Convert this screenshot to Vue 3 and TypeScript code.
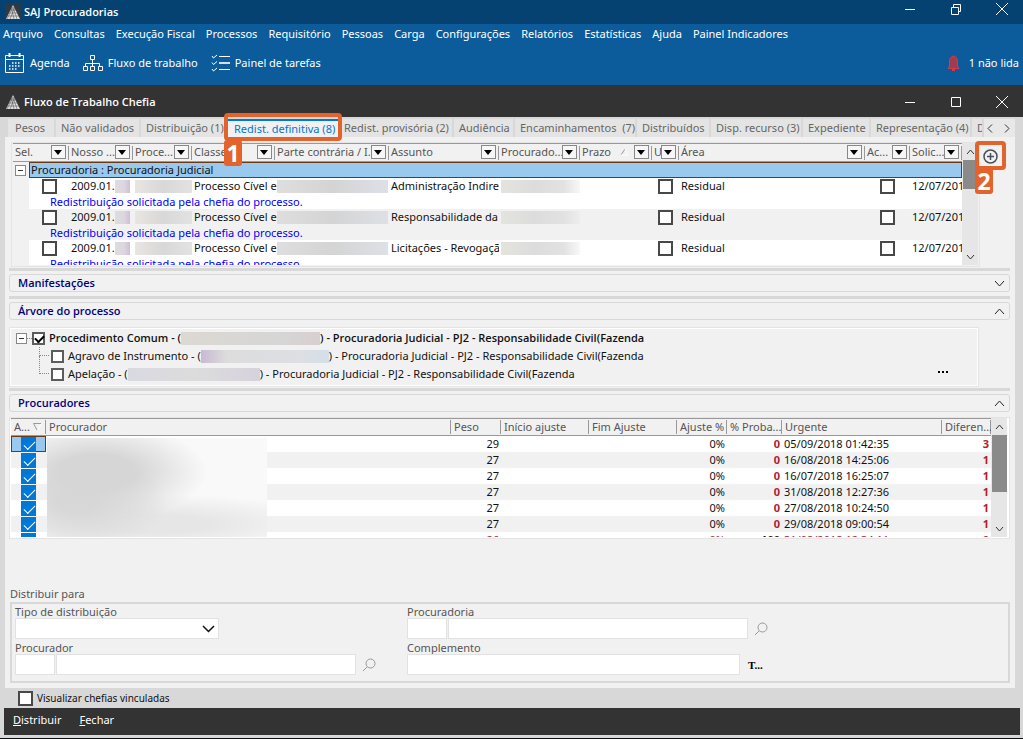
<script setup lang="ts">
import { ref } from 'vue'

interface Tab { id: string; label: string; active?: boolean }
interface Column { id: string; label: string; span?: number }
interface Attorney {
  active: boolean; weight: string; adjust: string; share: string; urgent: string; diff: string; alert?: boolean
}

const menus: string[] = [
  'Arquivo', 'Consultas', 'Execução Fiscal', 'Processos', 'Requisitório', 'Pessoas', 'Carga',
  'Configurações', 'Relatórios', 'Estatísticas', 'Ajuda', 'Painel Indicadores',
]

const tabs: Tab[] = [
  { id: 'pesos', label: 'Pesos' },
  { id: 'nao-validados', label: 'Não validados' },
  { id: 'distribuicao', label: 'Distribuição (1)' },
  { id: 'definitiva', label: 'Redist. definitiva (8)', active: true },
  { id: 'provisoria', label: 'Redist. provisória (2)' },
  { id: 'audiencia', label: 'Audiência' },
  { id: 'encaminhamentos', label: 'Encaminhamentos  (7)' },
  { id: 'distribuidos', label: 'Distribuídos' },
  { id: 'recurso', label: 'Disp. recurso (3)' },
  { id: 'expediente', label: 'Expediente' },
  { id: 'representacao', label: 'Representação (4)' },
  { id: 'last', label: 'D' },
]

const columns: Column[] = [
  { id: 'sel', label: 'Sel.', span: 2 },
  { id: 'nosso', label: 'Nosso ...' },
  { id: 'proce', label: 'Proce...' },
  { id: 'classe', label: 'Classe' },
  { id: 'parte', label: 'Parte contrária / I...' },
  { id: 'assunto', label: 'Assunto' },
  { id: 'procurador', label: 'Procurado...' },
  { id: 'prazo', label: 'Prazo' },
  { id: 'urgente', label: 'U' },
  { id: 'area', label: 'Área' },
  { id: 'acao', label: 'Ac...' },
  { id: 'solic', label: 'Solic...' },
]

const cases = ref([
  { subject: 'Administração Indireta', selected: false, urgent: false, action: false },
  { subject: 'Responsabilidade da', selected: false, urgent: false, action: false },
  { subject: 'Licitações - Revogação', selected: false, urgent: false, action: false },
])

const attorneyColumns: string[] = [
  'Procurador', 'Peso', 'Início ajuste', 'Fim Ajuste', 'Ajuste %', '% Proba...', 'Urgente', 'Diferen...',
]

const attorneys = ref<Attorney[]>([
  { active: true, weight: '29', adjust: '0%', share: '0', urgent: '05/09/2018 01:42:35', diff: '3' },
  { active: true, weight: '27', adjust: '0%', share: '0', urgent: '16/08/2018 14:25:06', diff: '1' },
  { active: true, weight: '27', adjust: '0%', share: '0', urgent: '16/07/2018 16:25:07', diff: '1' },
  { active: true, weight: '27', adjust: '0%', share: '0', urgent: '31/08/2018 12:27:36', diff: '1' },
  { active: true, weight: '27', adjust: '0%', share: '0', urgent: '27/08/2018 10:24:50', diff: '1' },
  { active: true, weight: '27', adjust: '0%', share: '0', urgent: '29/08/2018 09:00:54', diff: '1' },
  { active: true, weight: '26', adjust: '0%', share: '100', urgent: '31/08/2018 12:34:11', diff: '0', alert: true },
])

const rootChecked = ref(true)
const showLinked = ref(false)
</script>

<template>
  <div class="app">
    <header class="titlebar">
      <svg class="logo framed" width="16" height="16" viewBox="0 0 16 16" aria-hidden="true">
        <path d="M8 1 15 15H1Z" fill="#e0e0e0" />
        <path d="M1 12h14M2 9h12M4 6h8M5 15 9.500 4M9 15 6.500 4M12 15 8 3M2 15 8 3" stroke="#444" stroke-width=".5" fill="none" />
      </svg>
      <h1>SAJ Procuradorias</h1>
      <div class="window-buttons">
        <button aria-label="Minimizar"><svg width="12" height="12"><path d="M1 6.500h10" /></svg></button>
        <button aria-label="Restaurar"><svg width="12" height="12"><path d="M1.500 4.500h7v7h-7zM3.500 4V1.500h7v7H9" /></svg></button>
        <button aria-label="Fechar aplicativo"><svg width="14" height="14"><path d="m1 1 12 12M13 1 1 13" /></svg></button>
      </div>
    </header>

    <div class="ribbon">
      <nav class="menu">
        <button v-for="m in menus" :key="m">{{ m }}</button>
      </nav>
      <div class="tools">
        <button class="tool">
          <svg width="20" height="20" viewBox="0 0 20 20" fill="none" stroke="#fff">
            <path d="M.500 2.500h18v17H.500zM.500 6.500h18" />
            <path d="M4.500 0v4M14.500 0v4" stroke-width="2" />
            <path d="M7 10h9M4 13h12M4 16h9" stroke-width="1.500" stroke-dasharray="1.500 1.500" />
          </svg>
          Agenda
        </button>
        <button class="tool flow">
          <svg width="20" height="18" viewBox="0 0 20 18" fill="none" stroke="#fff">
            <path d="M7.500 1.500h4v4h-4zM9.500 5.500v7M2.500 12.500v-3h14v3M.500 12.500h4v4h-4zM7.500 12.500h4v4h-4zM15.500 12.500h4v4h-4z" />
          </svg>
          Fluxo de trabalho
        </button>
        <button class="tool tasks">
          <svg width="20" height="18" viewBox="0 0 20 18" fill="none" stroke="#fff">
            <path d="m1 2 1.500 2L6 1M1 8.500l1.500 2 3.500-3M1 15l1.500 2L6 14" />
            <path d="M8 2.500h11M8 15.500h11" />
            <path d="M8 9h11" stroke="#cfe0ee" stroke-width="2" />
          </svg>
          Painel de tarefas
        </button>
        <button class="tool unread">
          <svg width="13" height="17" viewBox="0 0 13 17">
            <path d="M6.500 1C3.500 1.500 2.500 4 2.500 7v4L1 13.500h11L10.500 11V7c0-3-1-5.500-4-6Z" fill="#a33b50" stroke="#d33a45" />
            <path d="M5 15h3" stroke="#d33a45" stroke-width="2" />
          </svg>
          1 não lida
        </button>
      </div>
    </div>

    <div class="subtitle">
      <svg class="logo" width="16" height="16" viewBox="0 0 16 16" aria-hidden="true">
        <path d="M8 1 15 15H1Z" fill="#e0e0e0" />
        <path d="M1 12h14M2 9h12M4 6h8M5 15 9.500 4M9 15 6.500 4M12 15 8 3M2 15 8 3" stroke="#444" stroke-width=".5" fill="none" />
      </svg>
      <h2>Fluxo de Trabalho Chefia</h2>
      <div class="window-buttons">
        <button aria-label="Minimizar janela"><svg width="12" height="12"><path d="M1 6.500h10" /></svg></button>
        <button aria-label="Maximizar janela"><svg width="12" height="12"><path d="M1.500 1.500h9v9h-9z" /></svg></button>
        <button aria-label="Fechar janela"><svg width="14" height="14"><path d="m1 1 12 12M13 1 1 13" /></svg></button>
      </div>
    </div>

    <main class="workspace">
      <div class="tabs">
        <button v-for="t in tabs" :key="t.id" :class="['tab', t.id, { active: t.active }]">
          <span>{{ t.label }}</span>
          <span v-if="t.active" class="marker"><b>1</b></span>
        </button>
        <div class="tab-scroll">
          <button aria-label="Abas anteriores"><svg width="6" height="9"><path d="M5 .500 1 4.500l4 4" /></svg></button>
          <button aria-label="Próximas abas"><svg width="6" height="9"><path d="m1 .500 4 4-4 4" /></svg></button>
        </div>
      </div>

      <div class="panel">
        <div class="top-area">
          <div class="box cases">
            <div class="viewport">
              <table>
                <colgroup>
                  <col class="w-gutter"><col class="w-sel"><col class="w-nosso"><col class="w-proce"><col class="w-classe">
                  <col class="w-parte"><col class="w-assunto"><col class="w-procurador"><col class="w-prazo">
                  <col class="w-urgente"><col><col class="w-acao"><col class="w-solic">
                </colgroup>
                <thead>
                  <tr>
                    <th v-for="c in columns" :key="c.id" :colspan="c.span ?? 1" :class="c.id">
                      <div class="head">
                        <span>{{ c.label }}</span>
                        <svg v-if="c.id === 'prazo'" class="sort" width="9" height="8"><path d="M1 7 5 1" stroke="#999" /><path d="m5 1 3 6H1" stroke="#fff" fill="none" /></svg>
                        <button class="filter" :aria-label="'Filtrar ' + c.label"><svg width="9" height="5"><path d="M0 0h8L4 5Z" /></svg></button>
                      </div>
                    </th>
                  </tr>
                </thead>
                <tbody>
                  <tr class="group">
                    <td class="gutter"><button class="expander" aria-label="Recolher grupo"></button></td>
                    <td colspan="12" class="group-title">Procuradoria : Procuradoria Judicial</td>
                  </tr>
                </tbody>
                <tbody v-for="(c, i) in cases" :key="i" class="case">
                  <tr>
                    <td class="gutter"></td>
                    <td class="center"><input v-model="c.selected" type="checkbox" class="tick" aria-label="Selecionar processo"></td>
                    <td><div class="number">2009.01.<i class="mask violet"></i></div></td>
                    <td><i class="mask warm"></i></td>
                    <td class="class-name">Processo Cível e</td>
                    <td><i class="mask cool"></i></td>
                    <td>{{ c.subject }}</td>
                    <td><i class="mask faint"></i></td>
                    <td></td>
                    <td class="center"><input v-model="c.urgent" type="checkbox" class="tick" aria-label="Urgente"></td>
                    <td>Residual</td>
                    <td class="center"><input v-model="c.action" type="checkbox" class="tick" aria-label="Ação"></td>
                    <td>12/07/2018</td>
                  </tr>
                  <tr class="note">
                    <td class="gutter"></td>
                    <td colspan="12">Redistribuição solicitada pela chefia do processo.</td>
                  </tr>
                </tbody>
              </table>
            </div>
            <div class="scrollbar">
              <button aria-label="Rolar processos para cima"><svg width="9" height="6"><path d="m1 5 3.500-4L8 5" /></svg></button>
              <div class="thumb small"></div>
              <button aria-label="Rolar processos para baixo"><svg width="9" height="6"><path d="m1 1 3.500 4L8 1" /></svg></button>
            </div>
          </div>
          <button class="add" aria-label="Adicionar">
            <svg width="15" height="15" viewBox="0 0 15 15"><circle cx="7.500" cy="7.500" r="6.500" /><path d="M4 7.500h7M7.500 4v7" /></svg>
            <span class="marker"><b>2</b></span>
          </button>
        </div>

        <div class="splitter"></div>
        <button class="section">Manifestações<svg width="11" height="7"><path d="m1 1 4.500 5L10 1" /></svg></button>
        <div class="splitter"></div>
        <button class="section">Árvore do processo<svg width="11" height="7"><path d="M1 6 5.500 1 10 6" /></svg></button>

        <div class="box tree">
          <div class="node root">
            <button class="expander" aria-label="Recolher árvore"></button>
            <span class="dots"></span>
            <label><input v-model="rootChecked" type="checkbox" class="tick light">Procedimento Comum - (<i class="mask sand"></i>) - Procuradoria Judicial - PJ2 - Responsabilidade Civil(Fazenda</label>
          </div>
          <div class="node child">
            <span class="branch"></span>
            <label><input type="checkbox" class="tick light">Agravo de Instrumento - (<i class="mask lilac"></i>) - Procuradoria Judicial - PJ2 - Responsabilidade Civil(Fazenda</label>
          </div>
          <div class="node child">
            <span class="branch"></span>
            <label><input type="checkbox" class="tick light">Apelação - (<i class="mask plain"></i>) - Procuradoria Judicial - PJ2 - Responsabilidade Civil(Fazenda</label>
            <button class="more" aria-label="Mais opções"><svg width="11" height="2"><path d="M0 0h2v2H0zM4 0h2v2H4zM8 0h2v2H8z" /></svg></button>
          </div>
        </div>

        <div class="splitter"></div>
        <button class="section">Procuradores<svg width="11" height="7"><path d="M1 6 5.500 1 10 6" /></svg></button>

        <div class="box attorneys">
          <div class="viewport">
            <table>
              <colgroup>
                <col class="w-active"><col><col class="w-peso"><col class="w-date"><col class="w-date">
                <col class="w-adjust"><col class="w-share"><col class="w-urgent"><col class="w-diff">
              </colgroup>
              <thead>
                <tr>
                  <th><div class="head">A...<svg width="9" height="8" fill="none"><path d="M8 .500H.500L4 7" stroke="#999" /><path d="M8 1 5 7" stroke="#fff" /></svg></div></th>
                  <th v-for="c in attorneyColumns" :key="c">{{ c }}</th>
                </tr>
              </thead>
              <tbody>
                <tr v-for="(a, i) in attorneys" :key="i" :class="{ alert: a.alert }">
                  <td class="active-cell"><input v-model="a.active" type="checkbox" class="blue-tick" aria-label="Procurador ativo"></td>
                  <td></td>
                  <td class="num">{{ a.weight }}</td>
                  <td></td>
                  <td></td>
                  <td class="num">{{ a.adjust }}</td>
                  <td class="num strong share">{{ a.share }}</td>
                  <td>{{ a.urgent }}</td>
                  <td class="num strong">{{ a.diff }}</td>
                </tr>
              </tbody>
            </table>
            <div class="haze"></div>
          </div>
          <div class="scrollbar">
            <button aria-label="Rolar procuradores para cima"><svg width="9" height="6"><path d="m1 5 3.500-4L8 5" /></svg></button>
            <div class="thumb large"></div>
            <button aria-label="Rolar procuradores para baixo"><svg width="9" height="6"><path d="m1 1 3.500 4L8 1" /></svg></button>
          </div>
        </div>

        <section class="distribute">
          <h3>Distribuir para</h3>
          <form class="fields" @submit.prevent>
            <div class="field">
              <label for="tipo">Tipo de distribuição</label>
              <div class="line">
                <div class="select">
                  <select id="tipo"><option></option></select>
                  <svg width="13" height="8"><path d="m1 1 5.500 5.500L12 1" /></svg>
                </div>
              </div>
            </div>
            <div class="field">
              <label for="procuradoria">Procuradoria</label>
              <div class="line">
                <input id="procuradoria" class="code" type="text">
                <input class="name" type="text" aria-label="Nome da procuradoria">
                <button class="search" aria-label="Buscar procuradoria"><svg width="14" height="14"><circle cx="8.500" cy="5.500" r="4.500" /><path d="M5 9 1 13" /></svg></button>
              </div>
            </div>
            <div class="field">
              <label for="procurador">Procurador</label>
              <div class="line">
                <input id="procurador" class="code" type="text">
                <input class="name" type="text" aria-label="Nome do procurador">
                <button class="search" aria-label="Buscar procurador"><svg width="14" height="14"><circle cx="8.500" cy="5.500" r="4.500" /><path d="M5 9 1 13" /></svg></button>
              </div>
            </div>
            <div class="field">
              <label for="complemento">Complemento</label>
              <div class="line">
                <input id="complemento" class="extra" type="text">
                <button class="text-button">T...</button>
              </div>
            </div>
          </form>
        </section>
      </div>

      <label class="linked"><input v-model="showLinked" type="checkbox" class="tick">Visualizar chefias vinculadas</label>

      <footer class="actions">
        <button><u>D</u>istribuir</button>
        <button><u>F</u>echar</button>
      </footer>
    </main>
  </div>
</template>

<style>
body {
  margin: 0;
  background: #d8d8d8;
}
</style>

<style scoped>
* {
  box-sizing: border-box;
}

.app {
  display: flex;
  flex-direction: column;
  min-height: 100vh;
  overflow: hidden;
  border-bottom: 1px solid #0b0f14;
  font: 11px/16px "Noto Sans", "Open Sans", sans-serif;
  color: #111;
}

button,
input,
select {
  margin: 0;
  padding: 0;
  border: 0;
  border-radius: 0;
  background: none;
  font: inherit;
  color: inherit;
}

h1,
h2,
h3 {
  margin: 0;
  font-size: 11px;
  line-height: 16px;
}

h1,
h2 {
  font-family: "Open Sans", sans-serif;
  font-weight: 600;
}

svg {
  flex: none;
  display: block;
}

/* window chrome */
.titlebar,
.subtitle {
  display: flex;
  align-items: center;
  gap: 3px;
  padding: 0 14px 0 5px;
  color: #fff;
}

.titlebar {
  height: 24px;
  background: #054271;
}

.subtitle {
  height: 32px;
  padding-top: 1px;
  background: #333;
}

.framed {
  background: #2b3a46;
}

.window-buttons {
  display: flex;
  gap: 31px;
  margin-left: auto;
  align-items: center;
}

.titlebar .window-buttons {
  padding-bottom: 6px;
}

.window-buttons button {
  display: grid;
  place-items: center;
  width: 15px;
}

.window-buttons path {
  fill: none;
  stroke: #fff;
}

.ribbon {
  height: 61px;
  background: #0c5c9c;
  color: #fff;
}

.menu {
  display: flex;
  gap: 11px;
  padding: 0 3px;
  line-height: 20px;
}

.tools {
  display: flex;
  padding: 9px 4px 0 5px;
}

.tool {
  display: flex;
  align-items: center;
  gap: 5px;
  height: 20px;
}

.flow,
.tasks {
  margin-left: 13px;
}

.tool.tasks {
  gap: 4px;
}

.unread {
  margin-left: auto;
  gap: 9px;
}

/* tabs */
.workspace {
  flex: 1;
  display: flex;
  flex-direction: column;
  padding: 2px 3px 3px 4px;
}

.tabs {
  display: flex;
  gap: 2px;
  height: 18px;
  padding: 0 5px 0 4px;
  white-space: nowrap;
}

.tab {
  position: relative;
  flex: none;
  padding: 0 0 0 5px;
  background: #e4e4e4;
  color: #666;
  line-height: 18px;
  text-align: left;
}

.tab span {
  white-space: pre;
}

.pesos { width: 46px; padding-left: 7px; }
.nao-validados { width: 83px; }
.distribuicao { width: 85px; }
.definitiva { width: 111px; padding-left: 6px; }
.provisoria { width: 111px; padding-left: 3px; }
.audiencia { width: 59px; }
.encaminhamentos { width: 120px; }
.distribuidos { width: 72px; }
.recurso { width: 90px; }
.expediente { width: 66px; }
.representacao { width: 99px; }

.tab.last {
  flex: 1;
  width: 0;
  overflow: hidden;
}

.tab.active {
  z-index: 2;
  border-top: 2px solid #0078d7;
  background: #f1f1f1;
  color: #0078d7;
  line-height: 14px;
}

.tab-scroll {
  display: flex;
  justify-content: space-between;
  width: 31px;
  padding: 0 5px 0 3px;
  background: #e8e8e8;
}

.tab-scroll button {
  display: grid;
  place-items: center;
}

.tab-scroll path,
.scrollbar path {
  fill: none;
  stroke: #333;
}

.marker {
  position: absolute;
  inset: -8px -3px -4px -4px;
  border: 4px solid #e2632b;
  border-radius: 4px;
  pointer-events: none;
}

.marker b {
  position: absolute;
  top: 23px;
  left: -4px;
  width: 18px;
  height: 26px;
  border-radius: 3px;
  background: #e2632b;
  color: #fff;
  font-size: 23px;
  line-height: 26px;
  text-align: center;
}

/* main panel */
.panel {
  flex: 1;
  display: flex;
  flex-direction: column;
  margin: 0 5px 0 1px;
  padding: 5px 5px 5px 4px;
  background: #f1f1f1;
}

.top-area {
  display: flex;
  align-items: flex-start;
  padding: 0 9px 0 2px;
}

.box {
  display: flex;
  border: 1px solid #e4e4e4;
  background: #f1f1f1;
}

.cases {
  flex: 1;
  min-width: 0;
  height: 125px;
  padding: 0 1px 1px;
}

.viewport {
  position: relative;
  flex: 1;
  min-width: 0;
  overflow: hidden;
  background: #fff;
}

table {
  width: 100%;
  table-layout: fixed;
  border-collapse: separate;
  border-spacing: 0;
}

.w-gutter { width: 16px; }
.w-sel { width: 40px; }
.w-nosso { width: 64px; }
.w-proce { width: 59px; }
.w-classe { width: 83px; }
.w-parte { width: 114px; }
.w-assunto { width: 110px; }
.w-procurador { width: 81px; }
.w-prazo { width: 72px; }
.w-urgente { width: 27px; }
.w-acao { width: 45px; }
.w-solic { width: 52px; }

th {
  height: 19px;
  padding: 0 2px;
  border-top: 1px solid #999;
  border-bottom: 1px solid #999;
  background: linear-gradient(#999, #999) right center / 1px 14px no-repeat #f1f1f1;
  color: #555;
  font-weight: 400;
  line-height: 16px;
  text-align: left;
  vertical-align: top;
  white-space: nowrap;
}

.head {
  display: flex;
  align-items: center;
  height: 16px;
}

.head span {
  flex: 1;
  min-width: 0;
}

.sort {
  margin-right: 5px;
}

.filter {
  display: grid;
  place-items: center;
  flex: none;
  width: 15px;
  height: 14px;
  margin-right: 1px;
  border: 1px solid #888;
  background: #f6f6f6;
}

td {
  height: 16px;
  padding: 0 0 0 2px;
  line-height: 16px;
  white-space: nowrap;
  overflow: hidden;
}

.cases .gutter {
  padding: 0 0 0 2px;
  background: #f1f1f1;
}

.cases .group-title {
  border: 1px solid #6b3c14;
  padding-left: 1px;
  background: #99c9ef;
  line-height: 14px;
}

.cases .class-name {
  overflow: visible;
}

.case:nth-of-type(odd) td {
  background: #f1f1f1;
}

.cases .note td {
  height: 15px;
  line-height: 15px;
}

.cases .note td:last-child {
  padding-left: 21px;
  color: #00f;
}

td.center {
  padding: 0;
}

.expander {
  display: block;
  width: 11px;
  height: 11px;
  border: 1px solid #888;
  background: linear-gradient(#333, #333) center / 5px 1px no-repeat #fff;
}

.tick {
  appearance: none;
  display: block;
  flex: none;
  width: 15px;
  height: 15px;
  margin: 0 auto;
  border: 2px solid #484848;
  background: #fff;
}

.number {
  display: flex;
  align-items: center;
}

.number .mask {
  flex: none;
  width: 15px;
}

.mask {
  display: block;
  height: 13px;
}

.violet { background: linear-gradient(90deg, #ddd, #ddd6e0 60%, #cdbfd6); }
.warm { background: linear-gradient(90deg, #e9e5e1, #d8d8d8 50%, #e2e2e2); }
.cool { width: 111px; background: linear-gradient(90deg, #dedede, #d4d4d4 50%, #dde0e6); }
.faint { width: 84px; background: linear-gradient(90deg, #e4e4de, #dcdcdc 40%, #e2e2e2 75%, transparent); }

.scrollbar {
  display: flex;
  flex: none;
  flex-direction: column;
  width: 16px;
  background: #e6e6e6;
}

.scrollbar button {
  display: grid;
  place-items: center;
  height: 17px;
}

.scrollbar button:last-child {
  margin-top: auto;
}

.thumb {
  width: 15px;
  margin-left: 1px;
  background: #8a8a8a;
}

.small { height: 29px; }
.large { height: 57px; }

.add {
  position: relative;
  width: 21px;
  height: 20px;
  margin: 4px 0 0;
  display: grid;
  place-items: center;
}

.add circle,
.add path {
  fill: none;
  stroke: #4a4f5c;
  stroke-width: 1.5;
}

.add .marker {
  inset: -5px -5px -4px;
}

.splitter {
  height: 3px;
  margin: 1px 0 3px;
  background: #d8d8d8;
}

.section {
  display: flex;
  justify-content: space-between;
  align-items: center;
  height: 18px;
  margin-bottom: 3px;
  padding: 0 4px 0 8px;
  border: 1px solid #d8d8d8;
  border-radius: 3px;
  color: #000080;
  font-family: "Open Sans", sans-serif;
  font-weight: 600;
}

.section path {
  fill: none;
  stroke: #222;
}

/* process tree */
.tree {
  flex-direction: column;
  height: 60px;
  margin: 4px 31px 0 0;
  padding: 1px 6px;
  box-shadow: inset 0 0 0 1px #fff;
}

.node {
  display: flex;
  align-items: center;
  height: 18px;
}

.node label {
  display: flex;
  align-items: center;
  white-space: pre;
}

.root {
  font-family: "Open Sans", sans-serif;
  font-weight: 600;
}

.child {
  padding-left: 23px;
}

.dots {
  width: 5px;
  border-top: 1px dotted #888;
}

.branch {
  align-self: flex-start;
  width: 10px;
  height: 9px;
  margin-right: 2px;
  border: dotted #888;
  border-width: 0 0 1px 1px;
}

.child:last-child .branch {
  height: 18px;
  margin-top: -9px;
}

.light {
  width: 13px;
  height: 13px;
  margin: 0 4px 0 0;
  border-color: #5c5c5c;
}

.light:checked::before {
  content: "";
  display: block;
  width: 7px;
  height: 4px;
  margin: 1px 0 0 1px;
  border: solid #000;
  border-width: 0 0 2px 2px;
  transform: rotate(-45deg);
}

.sand { width: 139px; background: linear-gradient(90deg, #dcd8d2, #d6d6d6 70%, #d8cfcf); }
.lilac { width: 128px; background: linear-gradient(90deg, #c9b9d2, #dcdcdc 20%, #dcdfe4 80%, #d4dfe8); }
.plain { width: 132px; background: linear-gradient(90deg, #d9d9e2, #dcdcdc 50%, #d6d2dc); }

.more {
  margin-left: auto;
  padding: 2px 23px 6px 6px;
}

/* attorneys */
.attorneys {
  height: 122px;
  margin-top: 2px;
  padding: 0 2px 1px 1px;
  background: #fff;
}

.w-active { width: 35px; }
.w-peso { width: 50px; }
.w-date { width: 88px; }
.w-adjust { width: 50px; }
.w-share { width: 55px; }
.w-urgent { width: 160px; }
.w-diff { width: 49px; }

.attorneys th {
  height: 18px;
  padding: 0 0 0 3px;
}

.attorneys th .head {
  gap: 3px;
}

.attorneys tr:nth-child(even) td {
  background: #f1f1f1;
}

.attorneys .num {
  padding-right: 2px;
  text-align: right;
}

.attorneys .strong {
  color: #b0202c;
  font-weight: 700;
}

.attorneys .alert td {
  color: #b0202c;
}

.attorneys .alert .share {
  color: #111;
}

.attorneys tr:first-child .active-cell {
  background: #99c9ef;
  box-shadow: inset 0 0 0 1px #6b3c14;
}

.active-cell {
  padding: 0 0 0 10px;
}

.blue-tick {
  appearance: none;
  display: flow-root;
  width: 15px;
  height: 15px;
  background: #0078d7;
}

.blue-tick:checked::before {
  content: "";
  display: block;
  width: 10px;
  height: 5px;
  margin: 4px 0 0 3px;
  border: solid #fff;
  border-width: 0 0 1px 1px;
  transform: rotate(-45deg);
}

.haze {
  position: absolute;
  left: 36px;
  top: 20px;
  bottom: 0;
  width: 220px;
  background:
    radial-gradient(ellipse 110px 50px at 50px 34px, #d6d6d6 35%, transparent),
    radial-gradient(ellipse 90px 50px at 30px 64px, #d8d8d8 20%, transparent),
    radial-gradient(ellipse 180px 30px at 110px 86px, #e6e6e6 30%, transparent),
    #f9f9f9;
}

/* form */
.distribute {
  margin-top: auto;
  padding: 0 0 0 1px;
  color: #555;
}

.distribute h3 {
  font-weight: 400;
}

.fields {
  display: grid;
  grid-template-columns: 392px 1fr;
  row-gap: 1px;
  padding: 0 3px 6px;
  border: 2px solid #d8d8d8;
}

.field > label {
  display: block;
  height: 14px;
  line-height: 16px;
}

.line {
  display: flex;
  align-items: center;
  gap: 1px;
  height: 21px;
}

.line input,
.select {
  height: 21px;
  border: 1px solid #e2e2e2;
  background: #fff;
}

.select {
  display: grid;
  grid-template-columns: 1fr 16px;
  align-items: center;
  width: 204px;
}

.select select {
  grid-area: 1 / 1 / 2 / 3;
  appearance: none;
  width: 100%;
  height: 19px;
}

.select svg {
  grid-area: 1 / 2;
  pointer-events: none;
}

.select path {
  fill: none;
  stroke: #111;
  stroke-width: 1.5;
}

.code { width: 40px; }
.name { width: 300px; }
.extra { width: 333px; }

.search {
  margin-left: 5px;
}

.search svg {
  fill: none;
  stroke: #999;
}

.text-button {
  margin-left: 7px;
  color: #000;
  font: 700 11px/14px "Liberation Serif", serif;
}

.linked {
  display: flex;
  align-items: center;
  gap: 4px;
  height: 20px;
  padding-left: 14px;
  font-size: 10px;
}

.linked .tick {
  margin: 0;
}

.actions {
  display: flex;
  gap: 18px;
  height: 27px;
  padding: 0 9px 3px;
  background: #333;
  color: #fff;
}
</style>
